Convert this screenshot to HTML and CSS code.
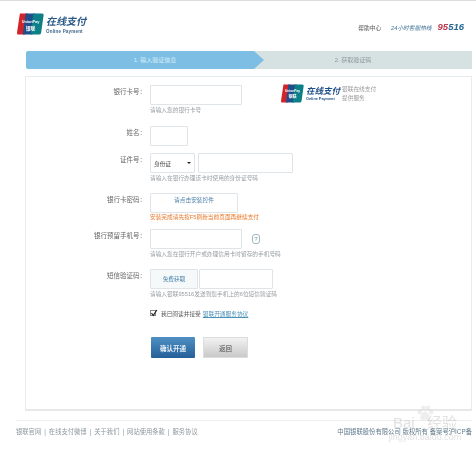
FILE: index.html
```html
<!DOCTYPE html>
<html lang="zh">
<head>
<meta charset="utf-8">
<title>在线支付</title>
<link rel="stylesheet" href="styles.css">
</head>
<body>
<div class="page">
  <header class="top">
    <div class="brand">
      <svg class="mark" viewBox="0 0 28 22" aria-hidden="true">
        <path d="M3 0H11L8 22H1Q0 22 0 20Z" fill="#d2232a"/>
        <path d="M9 0H19L16 22H6Z" fill="#1c4f8c"/>
        <path d="M17 0H26Q28 0 27.6 2L25 20Q24.700 22 23 22H14Z" fill="#0d7f86"/>
        <text x="14" y="9.500" class="mark-a">UnionPay</text>
        <text x="14" y="17" class="mark-b">银联</text>
      </svg>
      <div class="brand-text">
        <div class="brand-cn">在线支付</div>
        <div class="brand-en">Online Payment</div>
      </div>
    </div>
    <div class="help">
      <span class="help-center">帮助中心</span>
      <span class="hotline">24小时客服热线</span>
      <span class="number"><b class="num-red">95</b><b class="num-blue">516</b></span>
    </div>
  </header>

  <nav class="steps">
    <div class="step step-on">1. 输入验证信息</div>
    <div class="step step-off">2. 获取验证码</div>
  </nav>

  <main class="panel">
    <aside class="promo">
      <svg class="mark" viewBox="0 0 28 22" aria-hidden="true">
        <path d="M3 0H11L8 22H1Q0 22 0 20Z" fill="#d2232a"/>
        <path d="M9 0H19L16 22H6Z" fill="#1c4f8c"/>
        <path d="M17 0H26Q28 0 27.6 2L25 20Q24.700 22 23 22H14Z" fill="#0d7f86"/>
        <text x="14" y="9.500" class="mark-a">UnionPay</text>
        <text x="14" y="17" class="mark-b">银联</text>
      </svg>
      <div class="brand-text">
        <div class="brand-cn small">在线支付</div>
        <div class="brand-en small">Online Payment</div>
      </div>
      <p class="promo-text">银联在线支付<br>提供服务</p>
    </aside>

    <form class="form">
      <div class="row r-card">
        <label class="label">银行卡号：</label>
        <div class="field">
          <div class="box w-92"></div>
          <p class="hint">请输入您的银行卡号</p>
        </div>
      </div>
      <div class="row r-name">
        <label class="label">姓名：</label>
        <div class="field"><div class="box w-38"></div></div>
      </div>
      <div class="row r-id">
        <label class="label">证件号：</label>
        <div class="field">
          <div class="inline">
            <div class="box w-45 select"><span>身份证</span><i class="caret"></i></div>
            <div class="box w-95"></div>
          </div>
          <p class="hint">请输入在银行办理该卡时使用的身份证号码</p>
        </div>
      </div>
      <div class="row r-pass">
        <label class="label">银行卡密码：</label>
        <div class="field">
          <div class="box w-88 plugin">请点击安装控件</div>
          <p class="hint warn">安装完成请先按F5刷新当前页面再继续支付</p>
        </div>
      </div>
      <div class="row r-phone">
        <label class="label">银行预留手机号：</label>
        <div class="field">
          <div class="inline">
            <div class="box w-92"></div>
            <span class="q">?</span>
          </div>
          <p class="hint">请输入您在银行开户或办理信用卡时留存的手机号码</p>
        </div>
      </div>
      <div class="row r-sms">
        <label class="label">短信验证码：</label>
        <div class="field">
          <div class="inline tight">
            <div class="box w-48 fetch">免费获取</div>
            <div class="box w-74"></div>
          </div>
          <p class="hint">请输入银联95516发送到您手机上的6位短信验证码</p>
        </div>
      </div>
      <div class="agree">
        <span class="check"><svg viewBox="0 0 8 8" aria-hidden="true"><path d="M1.500 4L3.300 6.500L6.800 1" fill="none" stroke="#222" stroke-width="1.200"/></svg></span>
        <span class="agree-text">我已阅读并接受</span>
        <a class="agree-link">银联开通服务协议</a>
      </div>
      <div class="actions">
        <button type="button" class="btn btn-main">确认开通</button>
        <button type="button" class="btn btn-back">返回</button>
      </div>
    </form>
  </main>

  <footer class="foot">
    <div class="foot-links">
      <span>银联官网</span><i>|</i><span>在线支付微博</span><i>|</i><span>关于我们</span><i>|</i><span>网站使用条款</span><i>|</i><span>服务协议</span>
    </div>
    <div class="foot-copy">中国银联股份有限公司 版权所有 备案号沪ICP备</div>
  </footer>
  <div class="mark-water">
    <svg class="paw" viewBox="0 0 24 24" aria-hidden="true">
      <circle cx="5" cy="11" r="3"/><circle cx="10" cy="5" r="3"/><circle cx="16" cy="5" r="3"/><circle cx="20" cy="11" r="3"/>
      <path d="M12 10C8 10 5 16 6 20Q7 23 12 21Q17 23 18 20C19 16 16 10 12 10Z"/>
    </svg>
    <span class="wm-cn">Bai&nbsp;&nbsp;&nbsp;经验</span>
    <span class="wm-en">jingyan.baidu.com</span>
  </div>
</div>
</body>
</html>
```
FILE: styles.css
```css
* { box-sizing: border-box; }
html, body { margin: 0; padding: 0; background: #fff; }
body {
  font-family: "Liberation Sans", "Noto Sans CJK SC", sans-serif;
  font-size: 6px;
  color: #666;
  overflow: hidden;
}
.page {
  position: relative;
  width: 476px;
  height: 452px;
  border-top: 1px solid #dcdcdc;
  padding: 12px 4px 0 25px;
  filter: blur(0.5px);
}
.top {
  display: flex;
  justify-content: space-between;
  height: 38px;
  margin-left: -8px;
}
.brand { display: flex; align-items: flex-start; gap: 1px; }
.mark { display: block; width: 27px; height: 22px; flex: none; }
.mark-a { font: 700 4px "Liberation Sans", sans-serif; fill: #fff; text-anchor: middle; }
.mark-b { font: 700 5px "Noto Sans CJK SC", sans-serif; fill: #fff; text-anchor: middle; }
.brand-text { margin-left: 1px; }
.brand-cn {
  font: italic 700 10px/15px "Noto Sans CJK SC", sans-serif;
  color: #2d5c86;
}
.brand-en {
  font: 700 4.500px/7px "Liberation Sans", sans-serif;
  color: #40688c;
  letter-spacing: 0.200px;
}
.help { display: flex; align-items: center; height: 28px; padding-right: 8px; }
.help-center { color: #555; margin-right: 10px; font-size: 5.700px; }
.hotline { color: #3a6f96; font-style: italic; font-size: 5.700px; margin-right: 6px; }
.number { font: italic 700 9.500px/14px "Liberation Sans", sans-serif; }
.num-red { color: #c23a50; }
.num-blue { color: #256a94; }

.steps { display: flex; height: 18px; margin-left: 1px; }
.step {
  height: 18px;
  line-height: 18px;
  font-size: 6px;
  text-align: center;
}
.step-on {
  position: relative;
  z-index: 1;
  width: 238px;
  padding-left: 20px;
  background: #7dbfe4;
  color: #d8eef8;
  border-radius: 2px 0 0 2px;
  clip-path: polygon(0 0, 228px 0, 238px 50%, 228px 100%, 0 100%);
}
.step-off {
  flex: 1;
  margin-left: -10px;
  padding-right: 20px;
  background: #d6e1e2;
  color: #8b9a9d;
}

.panel {
  position: relative;
  height: 335px;
  margin-top: 7px;
  border: 1px solid #e4ecf0;
  border-bottom: 2px solid #e8e8e8;
}
.promo {
  position: absolute;
  top: 7px;
  left: 255px;
  display: flex;
  align-items: flex-start;
  gap: 0;
}
.promo .mark { width: 23px; height: 19px; margin-right: 1px; }
.brand-cn.small { font-size: 8.500px; line-height: 12px; color: #1f4f88; }
.brand-en.small { font-size: 3.800px; line-height: 6px; color: #1f4f88; letter-spacing: 0; }
.promo-text { margin: 1px 0 0 2px; font-size: 5.700px; line-height: 9px; color: #999; }

.form { padding-top: 8px; }
.row { display: flex; }
.label {
  width: 124px;
  padding-right: 4px;
  text-align: right;
  font-size: 6.500px;
  line-height: 14px;
  color: #666;
  white-space: nowrap;
}
.field { flex: 1; }
.box {
  height: 20px;
  border: 1px solid #dfe4e8;
  border-radius: 1px;
  background: #fff;
  flex: none;
}
.w-38 { width: 38px; }
.w-45 { width: 45px; }
.w-48 { width: 48px; }
.w-74 { width: 74px; }
.w-88 { width: 88px; }
.w-92 { width: 92px; }
.w-95 { width: 95px; }
.inline { display: flex; align-items: center; gap: 3px; }
.inline.tight { gap: 1px; }
.hint {
  margin: 1px 0 0;
  font-size: 5.700px;
  line-height: 9px;
  color: #9aa0a4;
  white-space: nowrap;
}
.hint.warn { margin-top: 0; color: #e8792a; }
.r-name { margin-top: 11px; }
.r-id { margin-top: 7px; }
.r-pass { margin-top: 10px; }
.r-phone { margin-top: 7px; }
.r-sms { margin-top: 10px; }
.select {
  display: flex;
  align-items: center;
  justify-content: space-between;
  padding: 0 3px;
  font-size: 5.700px;
  color: #444;
}
.caret {
  width: 0;
  height: 0;
  border: 2px solid transparent;
  border-top: 2.500px solid #222;
  border-bottom: 0;
}
.plugin {
  padding-top: 1px;
  text-align: center;
  font-size: 5.700px;
  line-height: 10px;
  color: #4b7fa8;
}
.fetch {
  text-align: center;
  font-size: 5.700px;
  line-height: 18px;
  color: #3d7ca5;
  background: #f6f9fa;
}
.q {
  width: 8px;
  height: 10px;
  margin-left: 7px;
  border: 1px solid #9db6c0;
  border-radius: 3px;
  font-size: 6px;
  line-height: 8px;
  text-align: center;
  color: #6e93a3;
}
.agree {
  display: flex;
  align-items: center;
  height: 10px;
  margin: 9px 0 0 124px;
  font-size: 5.700px;
  color: #555;
}
.check {
  width: 6px;
  height: 6px;
  margin-right: 5px;
  border: 1px solid #8a8a8a;
  background: #fff;
}
.check svg { display: block; width: 8px; height: 8px; margin: -2px 0 0 -1px; }
.agree-link { margin-left: 2px; color: #4a90b8; text-decoration: underline; }
.actions { display: flex; gap: 8px; margin: 19px 0 0 125px; }
.btn {
  width: 44px;
  height: 21px;
  padding: 0;
  border: 0;
  font: 700 6.500px "Liberation Sans", "Noto Sans CJK SC", sans-serif;
}
.btn-main {
  background: linear-gradient(#4f90c4, #245f97);
  color: #e8f2fa;
  border-radius: 1px;
}
.btn-back {
  width: 45px;
  background: linear-gradient(#f2f2f2, #c9c9c9);
  border: 1px solid #ddd;
  color: #777;
}
.foot {
  display: flex;
  justify-content: space-between;
  align-items: center;
  margin: 9px 0 0 -9px;
  padding-top: 6px;
  border-top: 1px solid #eee;
  font-size: 6.300px;
  color: #8e989e;
}
.foot-links i { font-style: normal; margin: 0 3px; }
.foot-copy { color: #5f7a8c; white-space: nowrap; font-size: 6.350px; }
.mark-water {
  position: absolute;
  left: 381px;
  top: 403px;
  width: 88px;
  display: flex;
  flex-direction: column;
  align-items: center;
  color: rgba(170, 170, 170, 0.35);
}
.paw { display: block; width: 18px; height: 18px; margin-bottom: -8px; fill: rgba(170, 170, 170, 0.2); }
.wm-cn { font-size: 15px; line-height: 17px; }
.wm-en { font-size: 9px; line-height: 13px; }
```
